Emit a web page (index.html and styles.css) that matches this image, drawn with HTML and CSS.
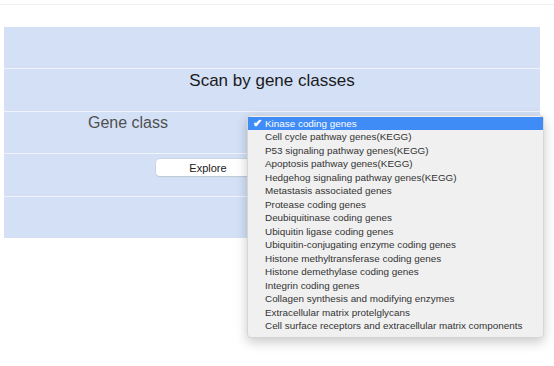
FILE: index.html
```html
<!DOCTYPE html>
<html lang="en">
<head>
    <meta charset="UTF-8">
    <title>Scan by gene classes</title>
    <link rel="stylesheet" href="styles.css">
</head>
<body>

    <div class="topbar"></div>

    <div class="scan-table">
        <div class="row"></div>
        <div class="row title-row">
            <div class="title">Scan by gene classes</div>
        </div>
        <div class="row field-row">
            <div class="label">Gene class</div>
            <div class="select-cell">
                <ul class="popup">
                    <li class="selected"><span class="check">&#10004;</span>Kinase coding genes</li>
                    <li>Cell cycle pathway genes(KEGG)</li>
                    <li>P53 signaling pathway genes(KEGG)</li>
                    <li>Apoptosis pathway genes(KEGG)</li>
                    <li>Hedgehog signaling pathway genes(KEGG)</li>
                    <li>Metastasis associated genes</li>
                    <li>Protease coding genes</li>
                    <li>Deubiquitinase coding genes</li>
                    <li>Ubiquitin ligase coding genes</li>
                    <li>Ubiquitin-conjugating enzyme coding genes</li>
                    <li>Histone methyltransferase coding genes</li>
                    <li>Histone demethylase coding genes</li>
                    <li>Integrin coding genes</li>
                    <li>Collagen synthesis and modifying enzymes</li>
                    <li>Extracellular matrix protelglycans</li>
                    <li>Cell surface receptors and extracellular matrix components</li>
                </ul>
            </div>
        </div>
        <div class="row button-row">
            <button class="explore">Explore</button>
        </div>
        <div class="row"></div>
    </div>

</body>
</html>
```

FILE: styles.css
```css
html, body {
    min-height: 100%;
}

body {
    margin: 0;
    min-height: 366px;
    background: white;
    font-family: "Liberation Sans", Arial, sans-serif;
    color: #222;
}

.topbar {
    height: 4px;
    border-bottom: 1px solid #f0f0f0;
}

.scan-table {
    margin: 22px 0 0 4px;
    width: 536px;
    background: #d3e0f6;
}

.row {
    height: 41.4px;
    border-top: 1px solid #eef3fc;
    display: flex;
}

.row:first-child {
    border-top: none;
}

.title-row {
    justify-content: center;
}

.title {
    font-size: 17px;
    padding-top: 2px;
    color: #1b1b1b;
}

.field-row {
    position: relative;
}

.label {
    width: 248px;
    text-align: center;
    font-size: 16px;
    color: #505050;
    padding-top: 2px;
}

.select-cell {
    flex: 1;
}

.button-row {
    padding-left: 152px;
}

.explore {
    margin-top: 5px;
    width: 104px;
    height: 17px;
    padding: 0;
    border: none;
    border-radius: 4px;
    background: white;
    box-shadow: 0 0 0 0.5px #c4c9d2, 0 1px 1px rgba(0, 0, 0, 0.12);
    font-family: "Liberation Sans", Arial, sans-serif;
    font-size: 11px;
    color: #222;
}

.popup {
    position: absolute;
    left: 243px;
    top: 3px;
    z-index: 2;
    width: 295px;
    margin: 0;
    padding: 1px 0 4px;
    list-style: none;
    background: #f0f0f0;
    border: 1px solid #d6d6d6;
    border-radius: 4px;
    box-shadow: 0 4px 12px rgba(0, 0, 0, 0.22);
    font-size: 9.9px;
    color: #333;
}

.popup li {
    height: 13.5px;
    line-height: 13.5px;
    padding-left: 17px;
    white-space: nowrap;
    position: relative;
}

.popup li.selected {
    background: #3f8cf6;
    color: white;
}

.check {
    position: absolute;
    left: 5px;
    font-size: 11px;
    font-weight: bold;
}
```
